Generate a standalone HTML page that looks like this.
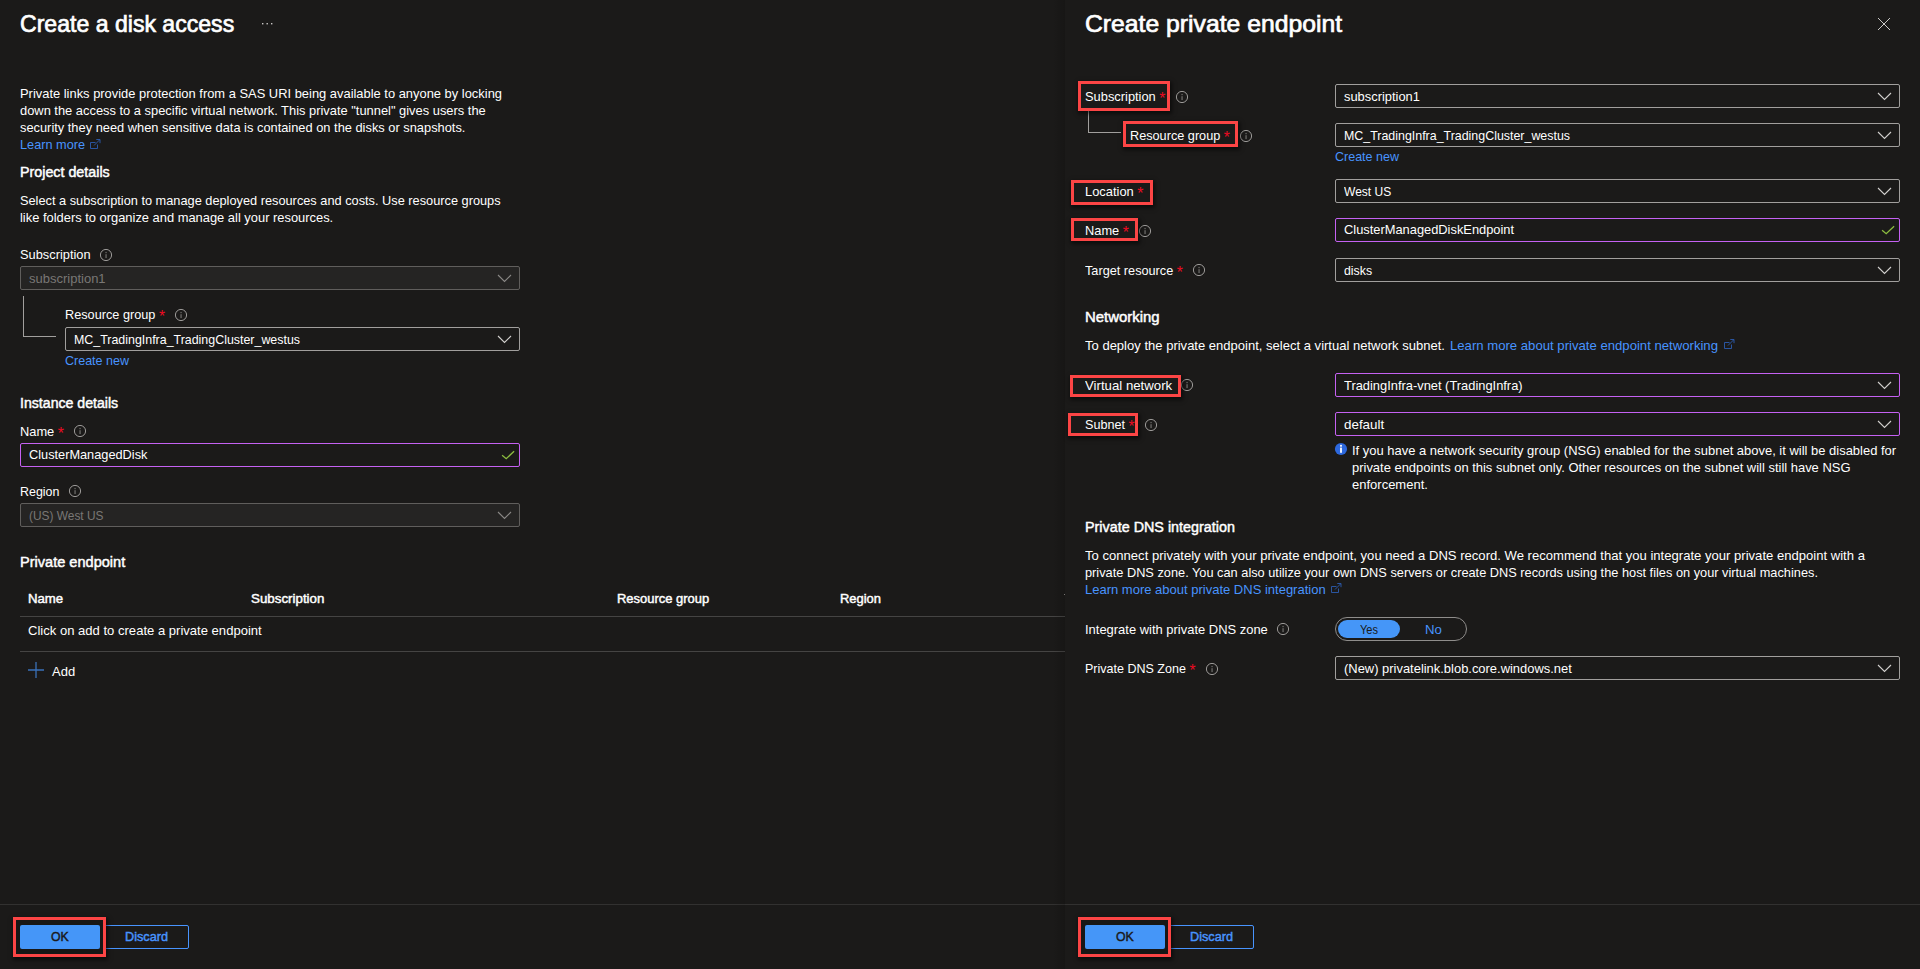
<!DOCTYPE html>
<html>
<head>
<meta charset="utf-8">
<title>Create a disk access</title>
<style>
*{box-sizing:border-box;margin:0;padding:0}
html,body{width:1920px;height:969px;overflow:hidden;background:#1b1a19}
body{font-family:"Liberation Sans",sans-serif;font-size:13px;color:#fff;position:relative}
.abs{position:absolute}
.t{position:absolute;white-space:nowrap;line-height:17px;height:17px;font-size:13px;color:#fff;transform-origin:0 50%}
.b{font-weight:normal;-webkit-text-stroke:0.45px currentColor}
.h2{font-size:14px}
.link{color:#4894fe}
.dis{color:#797775}
.star{color:#ee0a22;font-size:16px;line-height:0;vertical-align:-3px}
.title{font-size:24px;font-weight:normal;-webkit-text-stroke:0.7px currentColor;line-height:32px;height:32px}
.box{position:absolute;height:24px;border:1px solid #a19f9d;border-radius:2px;background:#1b1a19}
.box.dis{border-color:#605e5c;background:#252423}
.box.pur{border-color:#c561f2}
.hl{position:absolute;background:#454443;height:1px}
.fl{position:absolute;background:#323130;height:1px}
.red{position:absolute;border:3px solid #fc4545;box-shadow:1px 2px 4px 1px rgba(0,0,0,.55)}
.dk{position:absolute;background:#181716}
.tree{position:absolute;border-left:1px solid #a19f9d;border-bottom:1px solid #a19f9d}
.btn{position:absolute;height:24px;border-radius:2px}
.btn.pri{background:#4596f8}
.btn.sec{border:1px solid #4894fe}
</style>
</head>
<body>
<svg class="abs" style="left:261px;top:22px" width="12" height="4"><rect x="1" y="1" width="1.4" height="1.4" fill="#c8c6c4"/><rect x="5.5" y="1" width="1.4" height="1.4" fill="#c8c6c4"/><rect x="10" y="1" width="1.4" height="1.4" fill="#c8c6c4"/></svg>
<svg class="abs" style="left:90px;top:139px" width="11" height="11" viewBox="0 0 11 11"><path d="M5.5 3.5 H0.5 V9.5 H7.5 V5.5" fill="none" stroke="#2c5cb0" stroke-width="0.9"/><path d="M4 6.5 L9.6 0.9 M6.3 0.5 H10 V4.2" fill="none" stroke="#2c5cb0" stroke-width="0.9"/></svg><svg class="abs" style="left:99px;top:248px" width="14" height="14" viewBox="0 0 14 14"><circle cx="7" cy="7" r="5.6" fill="none" stroke="#9b9997" stroke-width="1"/><rect x="6.5" y="6.2" width="1.1" height="3.9" fill="#7a7876"/><rect x="6.5" y="3.9" width="1.1" height="1.3" fill="#7a7876"/></svg><div class="box dis" style="left:20px;top:266px;width:500px"></div><svg class="abs" style="left:497px;top:274px" width="15" height="9" viewBox="0 0 15 9"><path d="M1 1 L7.5 7.5 L14 1" fill="none" stroke="#8a8886" stroke-width="1.1"/></svg><div class="tree" style="left:23px;top:296px;width:33px;height:41px"></div><svg class="abs" style="left:174px;top:308px" width="14" height="14" viewBox="0 0 14 14"><circle cx="7" cy="7" r="5.6" fill="none" stroke="#9b9997" stroke-width="1"/><rect x="6.5" y="6.2" width="1.1" height="3.9" fill="#7a7876"/><rect x="6.5" y="3.9" width="1.1" height="1.3" fill="#7a7876"/></svg><div class="box " style="left:65px;top:327px;width:455px"></div><svg class="abs" style="left:497px;top:335px" width="15" height="9" viewBox="0 0 15 9"><path d="M1 1 L7.5 7.5 L14 1" fill="none" stroke="#d2d0ce" stroke-width="1.1"/></svg><svg class="abs" style="left:73px;top:424px" width="14" height="14" viewBox="0 0 14 14"><circle cx="7" cy="7" r="5.6" fill="none" stroke="#9b9997" stroke-width="1"/><rect x="6.5" y="6.2" width="1.1" height="3.9" fill="#7a7876"/><rect x="6.5" y="3.9" width="1.1" height="1.3" fill="#7a7876"/></svg><div class="box pur" style="left:20px;top:443px;width:500px"></div><svg class="abs" style="left:501px;top:450px" width="14" height="10" viewBox="0 0 14 10"><path d="M1.1 5.2 L5.2 8.7 L13.1 1.3" fill="none" stroke="#8cbd3f" stroke-width="1.3"/></svg><svg class="abs" style="left:68px;top:484px" width="14" height="14" viewBox="0 0 14 14"><circle cx="7" cy="7" r="5.6" fill="none" stroke="#9b9997" stroke-width="1"/><rect x="6.5" y="6.2" width="1.1" height="3.9" fill="#7a7876"/><rect x="6.5" y="3.9" width="1.1" height="1.3" fill="#7a7876"/></svg><div class="box dis" style="left:20px;top:503px;width:500px"></div><svg class="abs" style="left:497px;top:511px" width="15" height="9" viewBox="0 0 15 9"><path d="M1 1 L7.5 7.5 L14 1" fill="none" stroke="#8a8886" stroke-width="1.1"/></svg><div class="hl" style="left:20px;top:616px;width:1045px"></div><div class="hl" style="left:20px;top:651px;width:1045px"></div><svg class="abs" style="left:28px;top:662px" width="16" height="16" viewBox="0 0 16 16"><path d="M0 8 H16 M8 0 V16" stroke="#3a70b8" stroke-width="1.3" fill="none"/></svg><div class="fl" style="left:0;top:904px;width:1920px"></div><div class="abs" style="left:1064px;top:594px;width:1px;height:1px;background:#8a8886"></div><div class="dk" style="left:16px;top:920px;width:87px;height:34px"></div><div class="btn pri" style="left:20px;top:925px;width:80px"></div><div class="btn sec" style="left:104px;top:925px;width:85px"></div><div class="red" style="left:13px;top:917px;width:93px;height:40px"></div><div class="abs" style="left:1053px;top:0;width:12px;height:969px;background:linear-gradient(to right,rgba(0,0,0,0),rgba(0,0,0,.16))"></div>

<svg class="abs" style="left:1877px;top:17px" width="14" height="14" viewBox="0 0 14 14"><path d="M1 1 L13 13 M13 1 L1 13" stroke="#cccac8" stroke-width="1" fill="none"/></svg><div class="box " style="left:1335px;top:84px;width:565px"></div><svg class="abs" style="left:1877px;top:92px" width="15" height="9" viewBox="0 0 15 9"><path d="M1 1 L7.5 7.5 L14 1" fill="none" stroke="#d2d0ce" stroke-width="1.1"/></svg><div class="box " style="left:1335px;top:123px;width:565px"></div><svg class="abs" style="left:1877px;top:131px" width="15" height="9" viewBox="0 0 15 9"><path d="M1 1 L7.5 7.5 L14 1" fill="none" stroke="#d2d0ce" stroke-width="1.1"/></svg><div class="box " style="left:1335px;top:179px;width:565px"></div><svg class="abs" style="left:1877px;top:187px" width="15" height="9" viewBox="0 0 15 9"><path d="M1 1 L7.5 7.5 L14 1" fill="none" stroke="#d2d0ce" stroke-width="1.1"/></svg><div class="box pur" style="left:1335px;top:218px;width:565px"></div><svg class="abs" style="left:1881px;top:225px" width="14" height="10" viewBox="0 0 14 10"><path d="M1.1 5.2 L5.2 8.7 L13.1 1.3" fill="none" stroke="#8cbd3f" stroke-width="1.3"/></svg><div class="box " style="left:1335px;top:258px;width:565px"></div><svg class="abs" style="left:1877px;top:266px" width="15" height="9" viewBox="0 0 15 9"><path d="M1 1 L7.5 7.5 L14 1" fill="none" stroke="#d2d0ce" stroke-width="1.1"/></svg><div class="box pur" style="left:1335px;top:373px;width:565px"></div><svg class="abs" style="left:1877px;top:381px" width="15" height="9" viewBox="0 0 15 9"><path d="M1 1 L7.5 7.5 L14 1" fill="none" stroke="#d2d0ce" stroke-width="1.1"/></svg><div class="box pur" style="left:1335px;top:412px;width:565px"></div><svg class="abs" style="left:1877px;top:420px" width="15" height="9" viewBox="0 0 15 9"><path d="M1 1 L7.5 7.5 L14 1" fill="none" stroke="#d2d0ce" stroke-width="1.1"/></svg><div class="box " style="left:1335px;top:656px;width:565px"></div><svg class="abs" style="left:1877px;top:664px" width="15" height="9" viewBox="0 0 15 9"><path d="M1 1 L7.5 7.5 L14 1" fill="none" stroke="#d2d0ce" stroke-width="1.1"/></svg><div class="tree" style="left:1088px;top:111px;width:33px;height:22px"></div><svg class="abs" style="left:1175px;top:90px" width="14" height="14" viewBox="0 0 14 14"><circle cx="7" cy="7" r="5.6" fill="none" stroke="#9b9997" stroke-width="1"/><rect x="6.5" y="6.2" width="1.1" height="3.9" fill="#7a7876"/><rect x="6.5" y="3.9" width="1.1" height="1.3" fill="#7a7876"/></svg><svg class="abs" style="left:1239px;top:129px" width="14" height="14" viewBox="0 0 14 14"><circle cx="7" cy="7" r="5.6" fill="none" stroke="#9b9997" stroke-width="1"/><rect x="6.5" y="6.2" width="1.1" height="3.9" fill="#7a7876"/><rect x="6.5" y="3.9" width="1.1" height="1.3" fill="#7a7876"/></svg><svg class="abs" style="left:1138px;top:224px" width="14" height="14" viewBox="0 0 14 14"><circle cx="7" cy="7" r="5.6" fill="none" stroke="#9b9997" stroke-width="1"/><rect x="6.5" y="6.2" width="1.1" height="3.9" fill="#7a7876"/><rect x="6.5" y="3.9" width="1.1" height="1.3" fill="#7a7876"/></svg><svg class="abs" style="left:1192px;top:263px" width="14" height="14" viewBox="0 0 14 14"><circle cx="7" cy="7" r="5.6" fill="none" stroke="#9b9997" stroke-width="1"/><rect x="6.5" y="6.2" width="1.1" height="3.9" fill="#7a7876"/><rect x="6.5" y="3.9" width="1.1" height="1.3" fill="#7a7876"/></svg><svg class="abs" style="left:1180px;top:378px" width="14" height="14" viewBox="0 0 14 14"><circle cx="7" cy="7" r="5.6" fill="none" stroke="#9b9997" stroke-width="1"/><rect x="6.5" y="6.2" width="1.1" height="3.9" fill="#7a7876"/><rect x="6.5" y="3.9" width="1.1" height="1.3" fill="#7a7876"/></svg><svg class="abs" style="left:1144px;top:418px" width="14" height="14" viewBox="0 0 14 14"><circle cx="7" cy="7" r="5.6" fill="none" stroke="#9b9997" stroke-width="1"/><rect x="6.5" y="6.2" width="1.1" height="3.9" fill="#7a7876"/><rect x="6.5" y="3.9" width="1.1" height="1.3" fill="#7a7876"/></svg><svg class="abs" style="left:1276px;top:622px" width="14" height="14" viewBox="0 0 14 14"><circle cx="7" cy="7" r="5.6" fill="none" stroke="#9b9997" stroke-width="1"/><rect x="6.5" y="6.2" width="1.1" height="3.9" fill="#7a7876"/><rect x="6.5" y="3.9" width="1.1" height="1.3" fill="#7a7876"/></svg><svg class="abs" style="left:1205px;top:662px" width="14" height="14" viewBox="0 0 14 14"><circle cx="7" cy="7" r="5.6" fill="none" stroke="#9b9997" stroke-width="1"/><rect x="6.5" y="6.2" width="1.1" height="3.9" fill="#7a7876"/><rect x="6.5" y="3.9" width="1.1" height="1.3" fill="#7a7876"/></svg><svg class="abs" style="left:1724px;top:339px" width="11" height="11" viewBox="0 0 11 11"><path d="M5.5 3.5 H0.5 V9.5 H7.5 V5.5" fill="none" stroke="#2c5cb0" stroke-width="0.9"/><path d="M4 6.5 L9.6 0.9 M6.3 0.5 H10 V4.2" fill="none" stroke="#2c5cb0" stroke-width="0.9"/></svg><svg class="abs" style="left:1331px;top:583px" width="11" height="11" viewBox="0 0 11 11"><path d="M5.5 3.5 H0.5 V9.5 H7.5 V5.5" fill="none" stroke="#2c5cb0" stroke-width="0.9"/><path d="M4 6.5 L9.6 0.9 M6.3 0.5 H10 V4.2" fill="none" stroke="#2c5cb0" stroke-width="0.9"/></svg><svg class="abs" style="left:1334px;top:442px" width="14" height="14" viewBox="0 0 14 14"><circle cx="7" cy="7" r="6.1" fill="#2d68dd"/><rect x="6.1" y="5.6" width="1.8" height="5.2" fill="#fff"/><rect x="6.1" y="2.9" width="1.8" height="1.8" fill="#fff"/></svg><div class="abs" style="left:1335px;top:617px;width:132px;height:24px;border:1px solid #8f8d8b;border-radius:12px"></div><div class="abs" style="left:1338px;top:620px;width:62px;height:18px;border-radius:9px;background:#4596f8"></div><div class="dk" style="left:1081px;top:920px;width:87px;height:34px"></div><div class="btn pri" style="left:1085px;top:925px;width:80px"></div><div class="btn sec" style="left:1169px;top:925px;width:85px"></div>
<div id="t0" class="t title" style="left:20px;top:8px;transform:scaleX(0.9615)">Create a disk access</div>
<div id="t1" class="t " style="left:20px;top:85px;transform:scaleX(0.9926)">Private links provide protection from a SAS URI being available to anyone by locking</div>
<div id="t2" class="t " style="left:20px;top:102px;transform:scaleX(0.9909)">down the access to a specific virtual network. This private "tunnel" gives users the</div>
<div id="t3" class="t " style="left:20px;top:119px;transform:scaleX(0.9877)">security they need when sensitive data is contained on the disks or snapshots.</div>
<div id="t4" class="t link" style="left:20px;top:136px;transform:scaleX(0.9777)">Learn more</div>
<div id="t5" class="t b h2" style="left:20px;top:164px;transform:scaleX(1.0200)">Project details</div>
<div id="t6" class="t " style="left:20px;top:192px;transform:scaleX(0.9824)">Select a subscription to manage deployed resources and costs. Use resource groups</div>
<div id="t7" class="t " style="left:20px;top:209px;transform:scaleX(0.9918)">like folders to organize and manage all your resources.</div>
<div id="t8" class="t " style="left:20px;top:246px;transform:scaleX(0.9868)">Subscription</div>
<div id="t9" class="t dis" style="left:29px;top:270px">subscription1</div>
<div id="t10" class="t " style="left:65px;top:306px;transform:scaleX(0.9770)">Resource group <span class="star">*</span></div>
<div id="t11" class="t " style="left:74px;top:331px;transform:scaleX(0.9546)">MC_TradingInfra_TradingCluster_westus</div>
<div id="t12" class="t link" style="left:65px;top:352px;transform:scaleX(0.9626)">Create new</div>
<div id="t13" class="t b h2" style="left:20px;top:395px;transform:scaleX(1.0093)">Instance details</div>
<div id="t14" class="t " style="left:20px;top:423px;transform:scaleX(0.9881)">Name <span class="star">*</span></div>
<div id="t15" class="t " style="left:29px;top:446px;transform:scaleX(0.9812)">ClusterManagedDisk</div>
<div id="t16" class="t " style="left:20px;top:483px;transform:scaleX(0.9562)">Region</div>
<div id="t17" class="t dis" style="left:29px;top:507px;transform:scaleX(0.9153)">(US) West US</div>
<div id="t18" class="t b h2" style="left:20px;top:554px;transform:scaleX(1.0397)">Private endpoint</div>
<div id="t19" class="t b" style="left:28px;top:590px;transform:scaleX(1.0148)">Name</div>
<div id="t20" class="t b" style="left:251px;top:590px;transform:scaleX(1.0259)">Subscription</div>
<div id="t21" class="t b" style="left:617px;top:590px;transform:scaleX(0.9968)">Resource group</div>
<div id="t22" class="t b" style="left:840px;top:590px;transform:scaleX(0.9951)">Region</div>
<div id="t23" class="t " style="left:28px;top:622px;transform:scaleX(1.0043)">Click on add to create a private endpoint</div>
<div id="t24" class="t " style="left:52px;top:663px">Add</div>
<div id="t25" class="t title" style="left:1085px;top:8px;transform:scaleX(1.0301)">Create private endpoint</div>
<div id="t26" class="t " style="left:1085px;top:88px;transform:scaleX(0.9891)">Subscription <span class="star">*</span></div>
<div id="t27" class="t " style="left:1344px;top:88px;transform:scaleX(0.9907)">subscription1</div>
<div id="t28" class="t " style="left:1130px;top:127px;transform:scaleX(0.9760)">Resource group <span class="star">*</span></div>
<div id="t29" class="t " style="left:1344px;top:127px;transform:scaleX(0.9546)">MC_TradingInfra_TradingCluster_westus</div>
<div id="t30" class="t link" style="left:1335px;top:148px;transform:scaleX(0.9626)">Create new</div>
<div id="t31" class="t " style="left:1085px;top:183px;transform:scaleX(0.9915)">Location <span class="star">*</span></div>
<div id="t32" class="t " style="left:1344px;top:183px;transform:scaleX(0.9244)">West US</div>
<div id="t33" class="t " style="left:1085px;top:222px;transform:scaleX(0.9858)">Name <span class="star">*</span></div>
<div id="t34" class="t " style="left:1344px;top:221px;transform:scaleX(0.9890)">ClusterManagedDiskEndpoint</div>
<div id="t35" class="t " style="left:1085px;top:262px;transform:scaleX(0.9773)">Target resource <span class="star">*</span></div>
<div id="t36" class="t " style="left:1344px;top:262px;transform:scaleX(0.9485)">disks</div>
<div id="t37" class="t b h2" style="left:1085px;top:309px;transform:scaleX(1.0652)">Networking</div>
<div id="t38" class="t " style="left:1085px;top:337px;transform:scaleX(1.0023)">To deploy the private endpoint, select a virtual network subnet.</div>
<div id="t39" class="t link" style="left:1450px;top:337px;transform:scaleX(1.0104)">Learn more about private endpoint networking</div>
<div id="t40" class="t " style="left:1085px;top:377px;transform:scaleX(1.0169)">Virtual network</div>
<div id="t41" class="t " style="left:1344px;top:377px;transform:scaleX(0.9901)">TradingInfra-vnet (TradingInfra)</div>
<div id="t42" class="t " style="left:1085px;top:416px;transform:scaleX(0.9694)">Subnet <span class="star">*</span></div>
<div id="t43" class="t " style="left:1344px;top:416px;transform:scaleX(1.0295)">default</div>
<div id="t44" class="t " style="left:1352px;top:442px;transform:scaleX(0.9973)">If you have a network security group (NSG) enabled for the subnet above, it will be disabled for</div>
<div id="t45" class="t " style="left:1352px;top:459px;transform:scaleX(0.9959)">private endpoints on this subnet only. Other resources on the subnet will still have NSG</div>
<div id="t46" class="t " style="left:1352px;top:476px">enforcement.</div>
<div id="t47" class="t b h2" style="left:1085px;top:519px;transform:scaleX(1.0246)">Private DNS integration</div>
<div id="t48" class="t " style="left:1085px;top:547px;transform:scaleX(1.0062)">To connect privately with your private endpoint, you need a DNS record. We recommend that you integrate your private endpoint with a</div>
<div id="t49" class="t " style="left:1085px;top:564px;transform:scaleX(0.9829)">private DNS zone. You can also utilize your own DNS servers or create DNS records using the host files on your virtual machines.</div>
<div id="t50" class="t link" style="left:1085px;top:581px">Learn more about private DNS integration</div>
<div id="t51" class="t " style="left:1085px;top:621px;transform:scaleX(0.9959)">Integrate with private DNS zone</div>
<div id="t52" class="t " style="left:1359.7px;top:621px;transform:scaleX(0.8483);color:#1b1a19">Yes</div>
<div id="t53" class="t link" style="left:1424.9px;top:621px;transform:scaleX(1.0165)">No</div>
<div id="t54" class="t " style="left:1085px;top:660px;transform:scaleX(0.9633)">Private DNS Zone <span class="star">*</span></div>
<div id="t55" class="t " style="left:1344px;top:660px;transform:scaleX(0.9946)">(New) privatelink.blob.core.windows.net</div>
<div id="t56" class="t b" style="left:51px;top:928px;transform:scaleX(0.9470);color:#1b1a19">OK</div>
<div id="t57" class="t b link" style="left:124.7px;top:928px;transform:scaleX(0.9755)">Discard</div>
<div id="t58" class="t b" style="left:1116px;top:928px;transform:scaleX(0.9470);color:#1b1a19">OK</div>
<div id="t59" class="t b link" style="left:1189.7px;top:928px;transform:scaleX(0.9755)">Discard</div>
<div class="red" style="left:1078px;top:81px;width:92px;height:30px"></div><div class="red" style="left:1123px;top:121px;width:115px;height:26px"></div><div class="red" style="left:1071px;top:180px;width:82px;height:25px"></div><div class="red" style="left:1071px;top:218px;width:67px;height:23px"></div><div class="red" style="left:1070px;top:375px;width:111px;height:22px"></div><div class="red" style="left:1068px;top:413px;width:70px;height:23px"></div><div class="red" style="left:1078px;top:917px;width:93px;height:40px"></div>
</body>
</html>
